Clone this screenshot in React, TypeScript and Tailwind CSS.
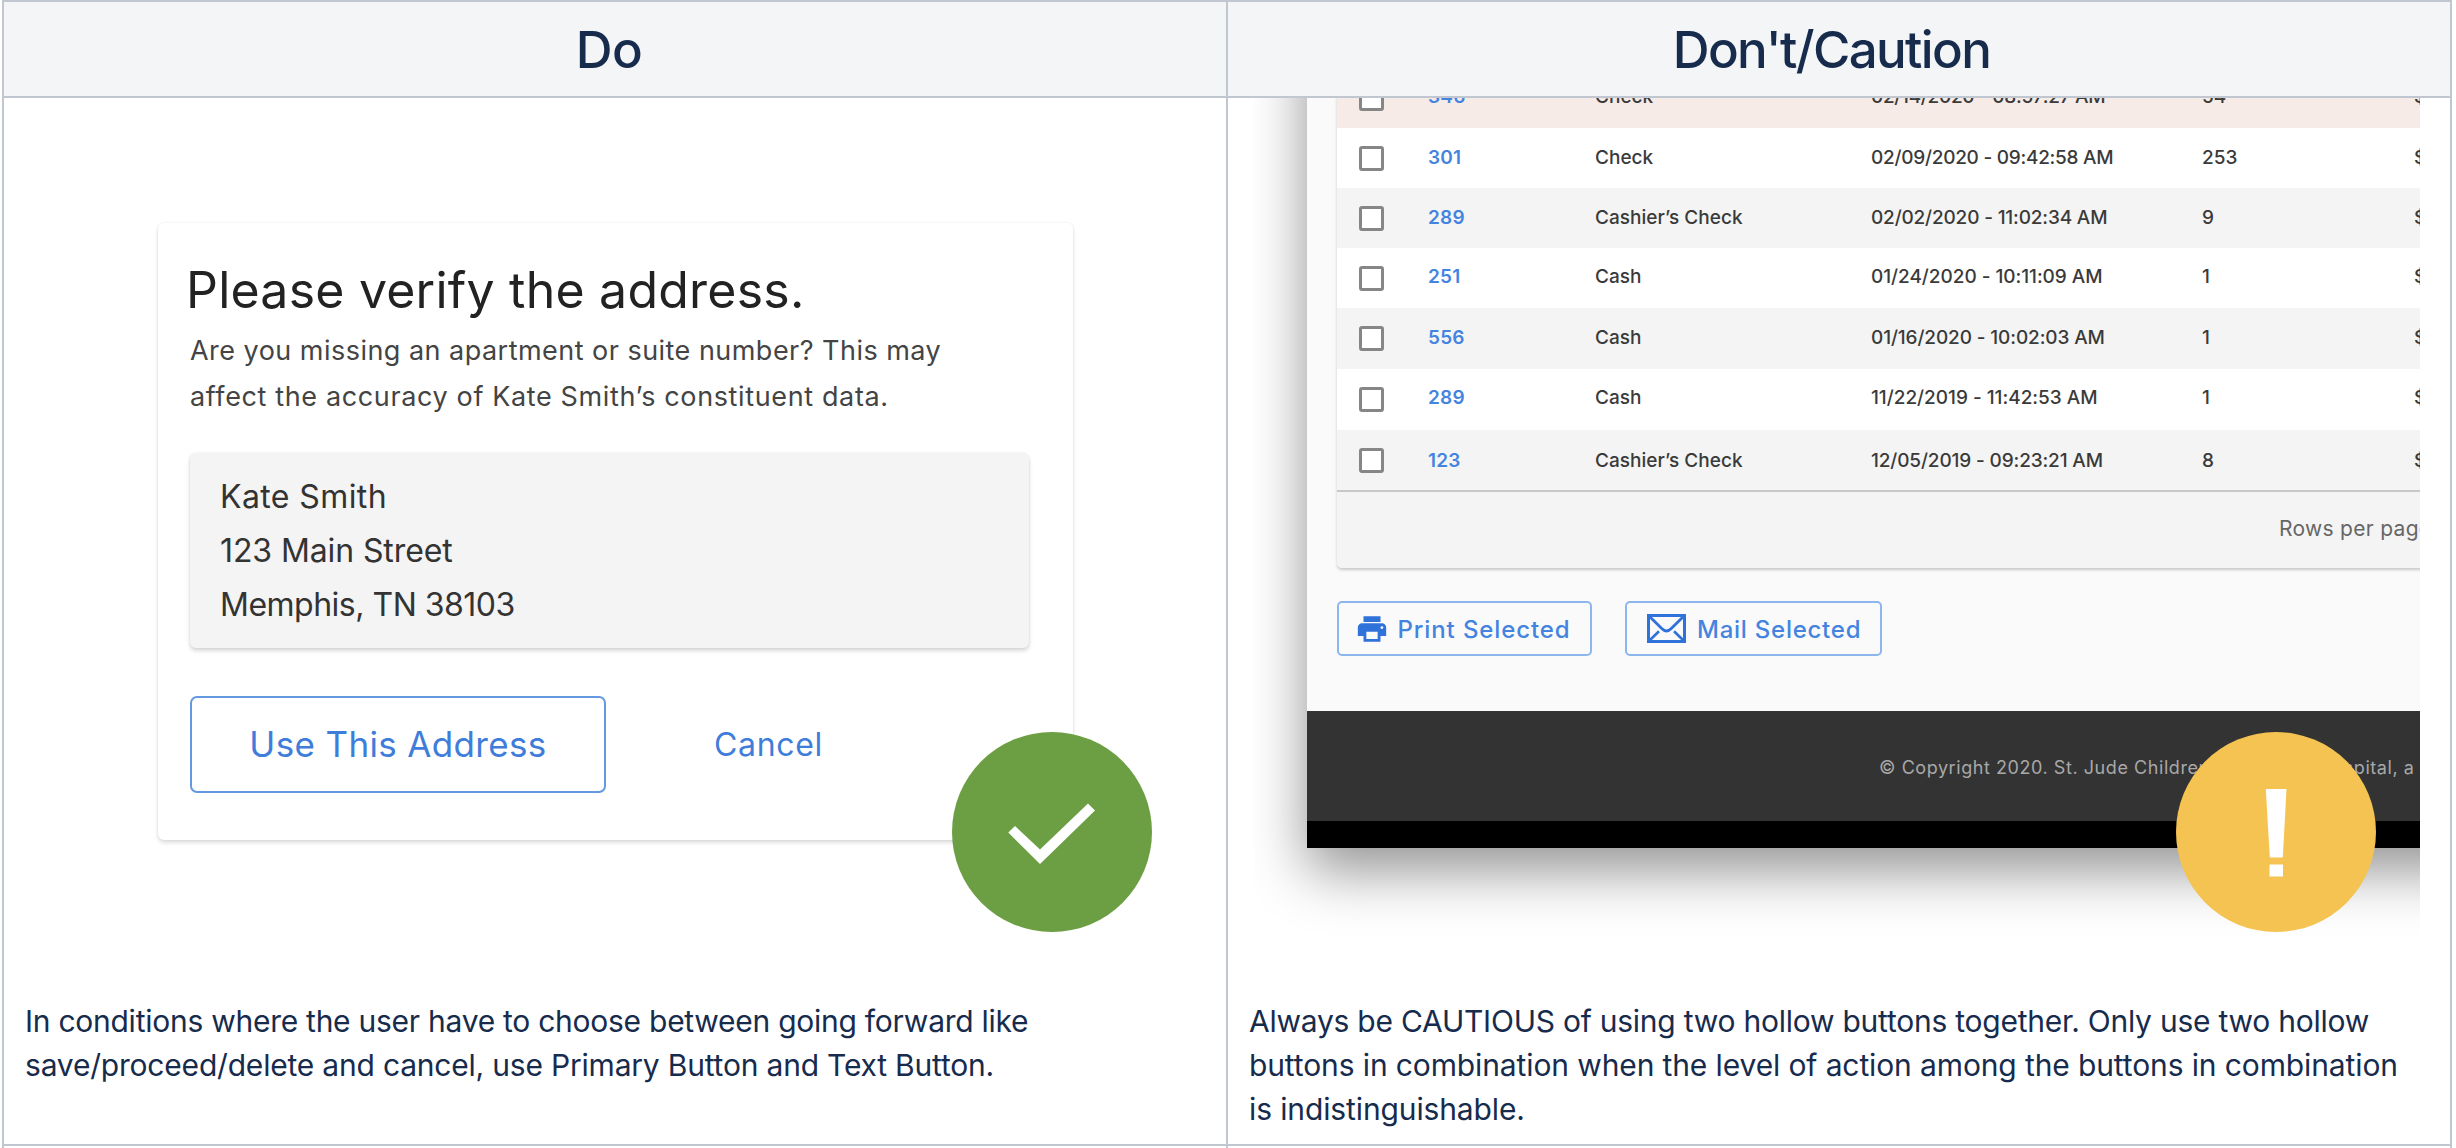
import type { ReactNode } from "react";
import { MdPrint } from "react-icons/md";

type Row = {
  id: string;
  type: string;
  date: string;
  count: string;
  height: string;
  tone: string;
  lift: string;
  dateTracking: string;
};

const rows: Row[] = [
  { id: "346", type: "Check", date: "02/14/2020 - 08:57:27 AM", count: "54", height: "h-[60px]", tone: "bg-[#f6ebe6]", lift: "pb-[2px]", dateTracking: "tracking-[-0.3px]" },
  { id: "301", type: "Check", date: "02/09/2020 - 09:42:58 AM", count: "253", height: "h-[60px]", tone: "bg-white", lift: "pb-0", dateTracking: "tracking-[-0.26px]" },
  { id: "289", type: "Cashier’s Check", date: "02/02/2020 - 11:02:34 AM", count: "9", height: "h-[60px]", tone: "bg-[#f4f4f4]", lift: "pb-0", dateTracking: "tracking-[-0.17px]" },
  { id: "251", type: "Cash", date: "01/24/2020 - 10:11:09 AM", count: "1", height: "h-[60px]", tone: "bg-white", lift: "pb-[2px]", dateTracking: "tracking-[-0.04px]" },
  { id: "556", type: "Cash", date: "01/16/2020 - 10:02:03 AM", count: "1", height: "h-[61px]", tone: "bg-[#f4f4f4]", lift: "pb-[2px]", dateTracking: "tracking-[-0.12px]" },
  { id: "289", type: "Cash", date: "11/22/2019 - 11:42:53 AM", count: "1", height: "h-[61px]", tone: "bg-white", lift: "pb-[3px]", dateTracking: "tracking-[-0.02px]" },
  { id: "123", type: "Cashier’s Check", date: "12/05/2019 - 09:23:21 AM", count: "8", height: "h-[60px]", tone: "bg-[#f4f4f4]", lift: "pt-[1px]", dateTracking: "tracking-[-0.14px]" },
];

function Column({ title, titleClass, picture, badge, children }: { title: string; titleClass: string; picture: ReactNode; badge: ReactNode; children: ReactNode }) {
  return (
    <section className="relative w-[1222px] flex-none">
      <h2 className={`flex h-[96px] items-center justify-center border-b-2 border-[#c1c7d0] bg-[#f4f5f7] text-[51px] font-[450] leading-none ${titleClass}`}>
        {title}
      </h2>
      <div className="relative h-[901px]">
        {picture}
        <div className="absolute left-[948px] top-[633.5px] size-[200px]">{badge}</div>
      </div>
      <div className="h-[145px] whitespace-nowrap pl-[21px] text-[30px] leading-[44px]">{children}</div>
      <div className="h-[2px] bg-[#c1c7d0]" />
    </section>
  );
}

function AddressCard() {
  return (
    <div className="flex h-full pl-[154px] pt-[125px]">
      <div className="h-[617px] w-[915px] rounded-[6px] bg-white pt-[37px] shadow-[0_3px_4px_rgba(0,0,0,0.12),0_0_3px_rgba(0,0,0,0.08)]">
        <h3 className="pl-[28px] text-[50px] leading-[60px] tracking-[0.22px] text-[#222]">Please verify the address.</h3>
        <div className="mt-[8px] whitespace-nowrap pl-[32px] text-[27px] leading-[46px] text-[#444]">
          <p className="tracking-[0.47px]">Are you missing an apartment or suite number? This may</p>
          <p className="tracking-[0.63px]">affect the accuracy of Kate Smith’s constituent data.</p>
        </div>
        <address className="ml-[32px] mt-[33px] h-[195px] w-[839px] rounded-[6px] bg-[#f4f4f4] pl-[30px] pt-[17px] text-[32px] not-italic leading-[54px] text-[#333] shadow-[0_3px_4px_rgba(0,0,0,0.15),0_0_3px_rgba(0,0,0,0.08)]">
          <p className="tracking-[0.4px]">Kate Smith</p>
          <p className="tracking-[-0.1px]">123 Main Street</p>
          <p className="tracking-[-0.5px]">Memphis, TN 38103</p>
        </address>
        <div className="ml-[32px] mt-[48px] flex items-center text-[#3f7ddb]">
          <button className="h-[97px] w-[416px] rounded-[7px] border-2 border-[#6499e2] text-[35px] tracking-[0.35px]">Use This Address</button>
          <button className="ml-[108px] text-[32px] tracking-[0.65px]">Cancel</button>
        </div>
      </div>
    </div>
  );
}

function MailIcon() {
  return (
    <svg viewBox="0 0 39 29" className="h-[29px] w-[39px] flex-none" fill="none" stroke="#2e72da" strokeWidth="3">
      <rect x="1.5" y="1.5" width="36" height="26" />
      <path d="M2.5 2.5 15 14.8Q19.5 19.3 24 14.8L36.5 2.5" strokeWidth="2.8" />
      <path d="M2.5 26.5 12 17.3M36.5 26.5 27 17.3" strokeWidth="2.6" />
    </svg>
  );
}

function ChecksWindow() {
  return (
    <div className="ml-[26px] h-full w-[1166px] overflow-hidden">
      <div className="-mt-[150px] ml-[53px] flex h-[900px] w-[1300px] flex-col bg-[#fafafa] shadow-[0_22px_54px_rgba(0,0,0,0.43)]">
        <div className="ml-[30px] mt-[120px] rounded-b-[5px] shadow-[0_2px_3px_rgba(0,0,0,0.2)]">
          {rows.map((row, i) => (
            <div
              key={i}
              className={`grid grid-cols-[69px_167px_276px_331px_212px_1fr] items-center whitespace-nowrap pl-[22px] text-[19px] font-[450] leading-[24px] text-[#3a3a3a] ${row.height} ${row.tone}`}
            >
              <span className="size-[25px] rounded-[3px] border-[3px] border-[#868686] bg-white" />
              <span className={`font-semibold tracking-[0.2px] text-[#4484e0] ${row.lift}`}>{row.id}</span>
              <span className={`tracking-[0.02px] ${row.lift}`}>{row.type}</span>
              <span className={`${row.dateTracking} ${row.lift}`}>{row.date}</span>
              <span className={row.lift}>{row.count}</span>
              <span className={row.lift}>$</span>
            </div>
          ))}
          <div className="flex h-[78px] items-center whitespace-nowrap rounded-b-[5px] border-t-2 border-[#c8c8c8] bg-[#f4f4f4] pb-[2px] pl-[942px] text-[21px] tracking-[0.3px] text-[#666]">
            Rows per page
          </div>
        </div>
        <div className="ml-[30px] mt-[33px] flex gap-[33px] whitespace-nowrap text-[24px] font-[450] text-[#4484e0]">
          <button className="flex h-[55px] w-[255px] items-center rounded-[5px] border-2 border-[#8db6ee] pl-[16px]">
            <MdPrint className="size-[34px] flex-none text-[#2e72da]" />
            <span className="ml-[8.5px] pt-[2px] tracking-[0.9px]">Print Selected</span>
          </button>
          <button className="flex h-[55px] w-[257px] items-center rounded-[5px] border-2 border-[#8db6ee] pl-[20px]">
            <MailIcon />
            <span className="ml-[11px] pt-[2px] tracking-[0.75px]">Mail Selected</span>
          </button>
        </div>
        <div className="mt-auto flex h-[110px] items-center whitespace-nowrap bg-[#333] pl-[572px] pt-[3px] text-[18px] tracking-[0.56px] text-[#a8a8a8]">
          © Copyright 2020. St. Jude Children’s Research Hospital, a not-for-profit
        </div>
        <div className="h-[27px] bg-black" />
      </div>
    </div>
  );
}

function CheckBadge() {
  return (
    <svg viewBox="0 0 200 200" className="size-full">
      <circle cx="100" cy="100" r="100" fill="#6c9f43" />
      <path d="M56.3 100.5 63 94 88 117.5 136 71.5 143 78.5 88 132Z" fill="#fff" />
    </svg>
  );
}

function CautionBadge() {
  return (
    <svg viewBox="0 0 200 200" className="size-full">
      <circle cx="100" cy="100" r="100" fill="#f5c351" />
      <path d="M89.8 57H110.5L106.8 125.5H93.8ZM93.5 132.5H107V144.5H93.5Z" fill="#fff" />
    </svg>
  );
}

export default function App() {
  return (
    <main className="h-[1148px] w-[2456px] overflow-hidden bg-white pl-[2px] font-['Inter',sans-serif] text-[#172b4d]">
      <div className="w-[2450px] border-t-2 border-[#c1c7d0]">
        <div className="flex h-[1146px] justify-between border-x-2 border-[#c1c7d0]">
          <Column title="Do" titleClass="pr-[12px] tracking-[-0.5px]" picture={<AddressCard />} badge={<CheckBadge />}>
            <p className="tracking-[-0.26px]">In conditions where the user have to choose between going forward like</p>
            <p className="tracking-[-0.2px]">save/proceed/delete and cancel, use Primary Button and Text Button.</p>
          </Column>
          <div className="w-[2px] flex-none bg-[#c1c7d0]" />
          <Column title="Don't/Caution" titleClass="pr-[15px] tracking-[-1.65px]" picture={<ChecksWindow />} badge={<CautionBadge />}>
            <p className="tracking-[-0.24px]">Always be CAUTIOUS of using two hollow buttons together. Only use two hollow</p>
            <p className="tracking-[-0.12px]">buttons in combination when the level of action among the buttons in combination</p>
            <p className="tracking-[-0.12px]">is indistinguishable.</p>
          </Column>
        </div>
      </div>
    </main>
  );
}
